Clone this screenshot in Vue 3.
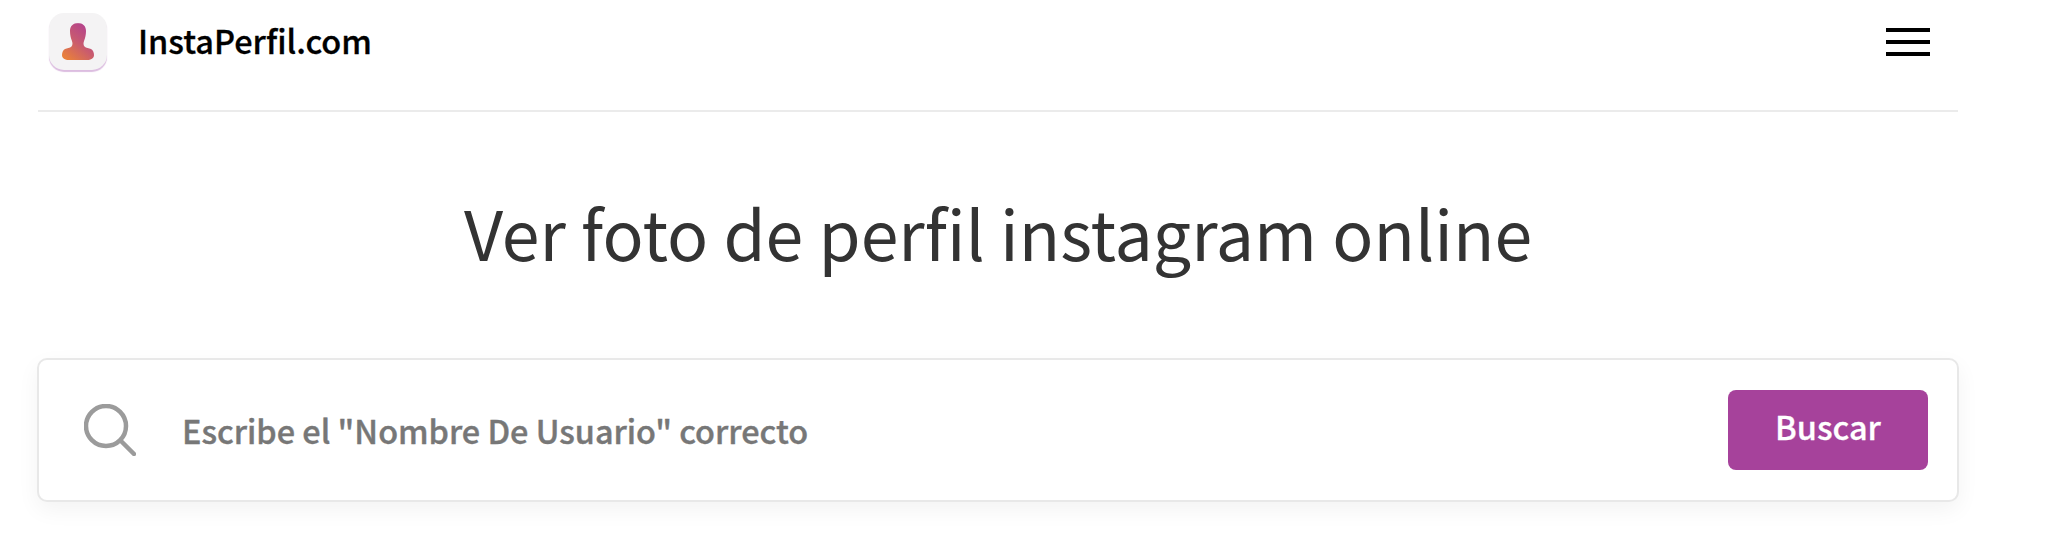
<script setup>
const placeholder = 'Escribe el "Nombre De Usuario" correcto'
</script>

<template>
  <div class="page">
    <header class="header">
      <div class="brand">
        <div class="logo">
          <svg width="32" height="37" viewBox="0 0 32 37">
            <defs>
              <linearGradient id="lg" x1="0.8" y1="0.05" x2="0.15" y2="0.95">
                <stop offset="0" stop-color="#b2408f" />
                <stop offset="0.5" stop-color="#c85a70" />
                <stop offset="1" stop-color="#e87f3c" />
              </linearGradient>
            </defs>
            <path fill="url(#lg)" d="M16.500 0C11 0 8 3 8 8c0 4 .8 7 1.800 9.500.9 2.200 1 4.500-.3 6-1.500 1.700-4.500 1.500-6.500 2.500C1 27.200 0 29.500 0 32c0 3.500 3 5 7 5h18c4 0 7-1.500 7-5 0-2.500-1-4.800-3-6-2-1-5-.8-6.500-2.500-1.300-1.500-1.200-3.800-.3-6 1-2.500 1.800-5.500 1.800-9.500 0-5-3-8-8.500-8z" />
          </svg>
        </div>
        <span class="name">InstaPerfil.com</span>
      </div>
      <button class="menu" aria-label="Menu"><span></span><span></span><span></span></button>
    </header>

    <h1 class="title">Ver foto de perfil instagram online</h1>

    <form class="search" @submit.prevent>
      <svg class="glass" width="52" height="52" viewBox="0 0 52 52" fill="none" stroke="#9b9b9b">
        <circle cx="22" cy="22" r="20" stroke-width="4.500" />
        <path d="M36.500 36.500L50 50" stroke-width="4.500" stroke-linecap="round" />
      </svg>
      <div class="placeholder">{{ placeholder }}</div>
      <button class="submit" type="submit">Buscar</button>
    </form>
  </div>
</template>

<style>
html, body { margin: 0; background: #fff; }
</style>

<style scoped>
.page {
  width: 1922px;
  min-height: 560px;
  margin-left: 37px;
  font-family: "Noto Sans CJK SC", "Noto Sans", sans-serif;
}
.header {
  box-sizing: border-box;
  border-bottom: 2px solid #ebebeb;
  margin: 0 1px;
  width: 1920px;
  height: 112px;
  display: flex;
  align-items: flex-start;
  justify-content: space-between;
  padding: 13px 28px 0 11px;
}
.brand { display: flex; align-items: center; }
.logo {
  width: 58px;
  height: 57px;
  border-radius: 15px;
  background: #f4f3f4;
  box-shadow: 0 2px 1px #dcbde0;
  display: flex;
  align-items: center;
  justify-content: center;
}
.name {
  margin-left: 31px;
  margin-bottom: 4px;
  font-size: 32.500px;
  font-weight: 500;
  color: #000;
  -webkit-text-stroke: 0.3px #000;
}
.menu {
  margin-top: 15px;
  width: 44px;
  height: 28px;
  padding: 0;
  border: 0;
  background: none;
  display: flex;
  flex-direction: column;
  justify-content: space-between;
}
.menu span { display: block; height: 4px; background: #000; }
.title {
  margin: 0;
  padding-top: 70px;
  text-align: center;
  font-size: 68px;
  line-height: 100px;
  font-weight: 400;
  color: #333;
  height: 178px;
  box-sizing: border-box;
}
.search {
  height: 144px;
  box-sizing: border-box;
  border: 2px solid #e8e8e8;
  border-radius: 10px;
  background: #fff;
  box-shadow: 0 8px 22px rgba(0, 0, 0, 0.05);
  display: flex;
  align-items: center;
  padding: 0 29px 0 45px;
  margin-top: 68px;
}
.glass { flex: none; }
.placeholder {
  flex: 1;
  margin-left: 46px;
  margin-bottom: 2px;
  font-size: 32.400px;
  font-weight: 500;
  color: #777;
  -webkit-text-stroke: 0.4px #777;
}
.submit {
  width: 200px;
  height: 80px;
  border: 0;
  border-radius: 8px;
  background: #a6429b;
  color: #fff;
  font: inherit;
  font-size: 32.500px;
  font-weight: 500;
  padding: 0 0 9px;
  -webkit-text-stroke: 0.3px #fff;
}
</style>
